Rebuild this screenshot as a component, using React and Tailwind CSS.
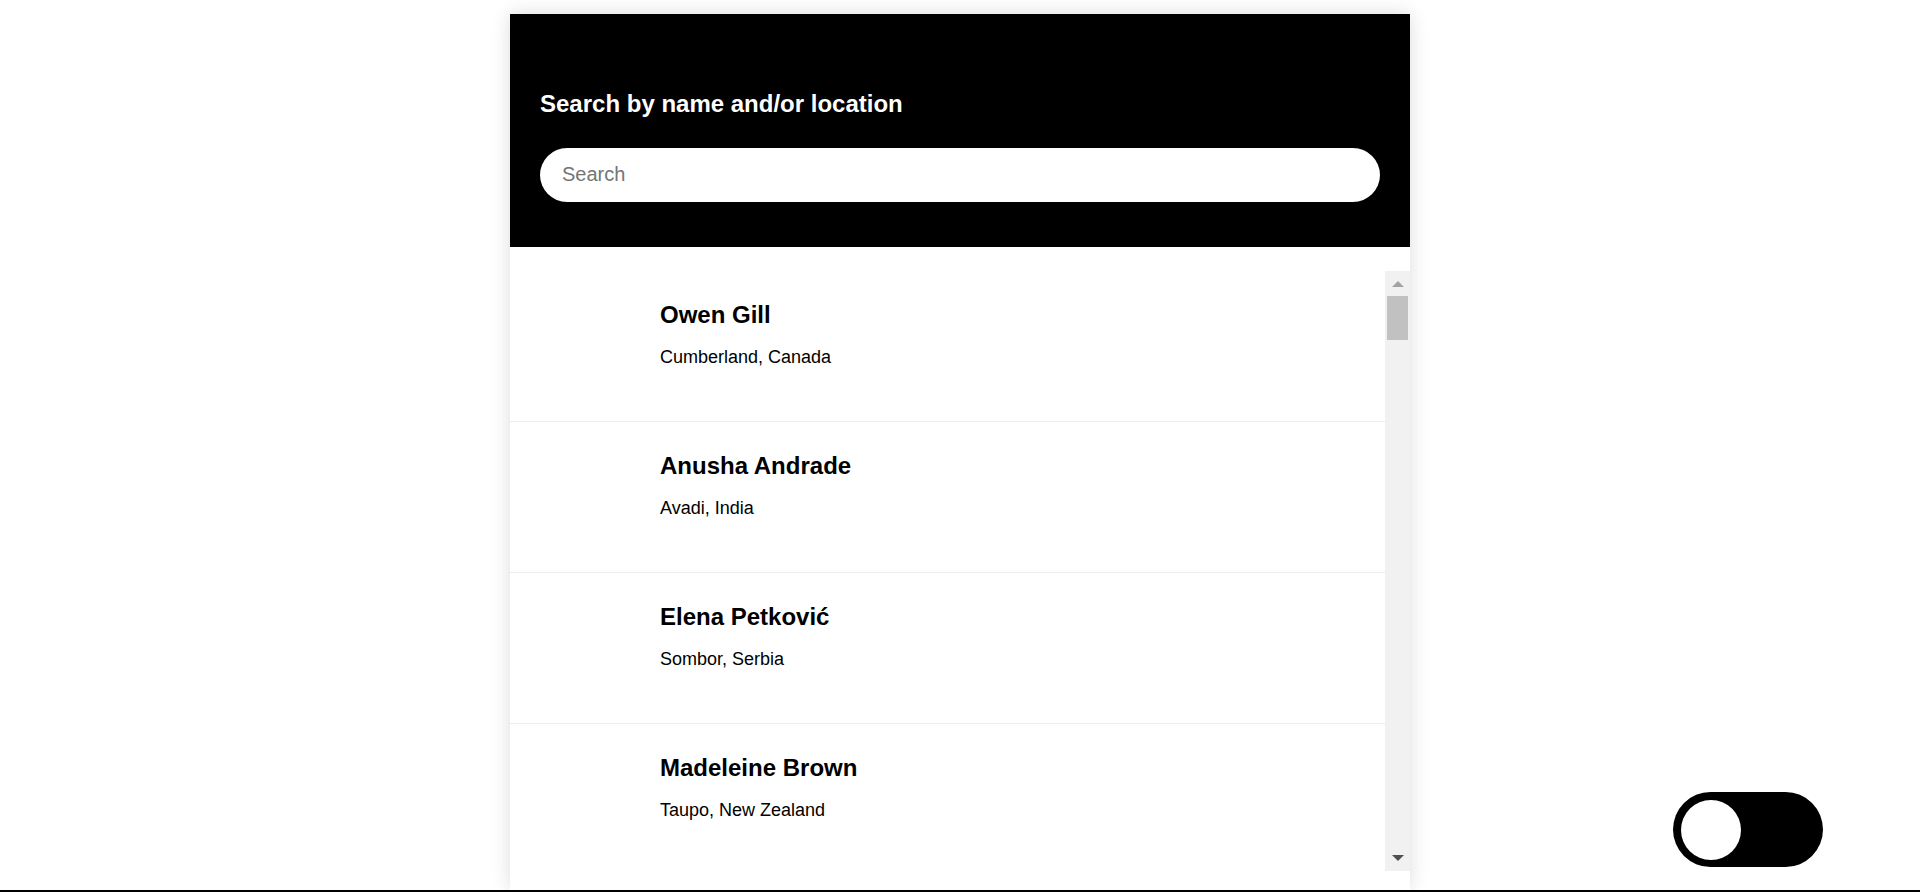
import React from 'react';

const people = [
  { name: 'Owen Gill', location: 'Cumberland, Canada' },
  { name: 'Anusha Andrade', location: 'Avadi, India' },
  { name: 'Elena Petković', location: 'Sombor, Serbia' },
  { name: 'Madeleine Brown', location: 'Taupo, New Zealand' },
];

function Scrollbar() {
  return (
    <div className="w-[25px] shrink-0 bg-[#f1f1f1] flex flex-col items-center pt-[10px] pb-[10px]">
      <svg width="12" height="6" viewBox="0 0 12 6">
        <polygon points="6,0 12,6 0,6" fill="#a3a3a3" />
      </svg>
      <div className="mt-[9px] w-[21px] h-[44px] bg-[#c1c1c1]" />
      <div className="flex-1" />
      <svg width="12" height="6" viewBox="0 0 12 6">
        <polygon points="0,0 12,0 6,6" fill="#505050" />
      </svg>
    </div>
  );
}

export default function App() {
  return (
    <div className="relative h-screen overflow-hidden flex flex-col bg-white text-black font-['Liberation_Sans',Arial,sans-serif]">
      <div className="h-[890px] shrink-0 pt-[14px] flex justify-center">
        <div className="w-[900px] bg-white shadow-[0_0_18px_rgba(0,0,0,0.14)] flex flex-col">
          <div className="bg-black pt-[76px] px-[30px] pb-[45px]">
            <h2 className="text-white text-[24px] font-bold leading-[27.6px]">
              Search by name and/or location
            </h2>
            <input
              type="text"
              placeholder="Search"
              className="mt-[30px] w-full h-[54px] rounded-full bg-white pl-[22px] pr-[22px] text-[20px] text-black placeholder:text-[#757575] outline-none"
            />
          </div>
          <div className="mt-[24px] h-[600px] flex">
            <ul className="flex-1 overflow-hidden">
              {people.map((p) => (
                <li key={p.name} className="h-[151px] border-b border-[#ececec] pt-[30px] pl-[150px]">
                  <h3 className="text-[24px] font-bold leading-[27.6px]">{p.name}</h3>
                  <p className="mt-[19px] text-[18px] leading-[20.7px]">{p.location}</p>
                </li>
              ))}
            </ul>
            <Scrollbar />
          </div>
        </div>
      </div>
      <div className="flex-1 bg-black" />
      <button className="absolute right-[97px] bottom-[25px] w-[150px] h-[75px] rounded-full bg-black flex items-center pl-[8px]">
        <span className="w-[60px] h-[60px] rounded-full bg-white" />
      </button>
    </div>
  );
}
